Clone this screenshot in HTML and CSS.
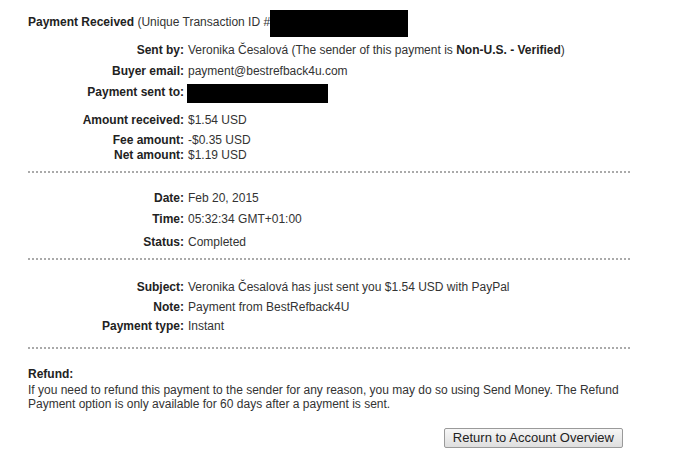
FILE: index.html
```html
<!DOCTYPE html>
<html>
<head>
    <title>Payment Details</title>
<link rel="stylesheet" href="styles.css">
</head>
<body>
  <div class="page">
    <div class="title">
      <b>Payment Received</b> (Unique Transaction ID #
      <span class="redact redact-id"></span>
    </div>

    <div class="group first">
      <div class="row"><span class="label">Sent by:</span><span class="value">Veronika Česalová (The sender of this payment is <b>Non-U.S. - Verified</b>)</span></div>
      <div class="row"><span class="label">Buyer email:</span><span class="value">payment@bestrefback4u.com</span></div>
      <div class="row"><span class="label">Payment sent to:</span><span class="redact redact-to"></span></div>
      <div class="row lead"><span class="label">Amount received:</span><span class="value">$1.54 USD</span></div>
      <div class="row close"><span class="label">Fee amount:</span><span class="value">-$0.35 USD</span></div>
      <div class="row flush"><span class="label">Net amount:</span><span class="value">$1.19 USD</span></div>
    </div>
    <div class="dots"></div>

    <div class="group second">
      <div class="row"><span class="label">Date:</span><span class="value">Feb 20, 2015</span></div>
      <div class="row"><span class="label">Time:</span><span class="value">05:32:34 GMT+01:00</span></div>
      <div class="row wide"><span class="label">Status:</span><span class="value">Completed</span></div>
    </div>
    <div class="dots"></div>

    <div class="group third">
      <div class="row"><span class="label">Subject:</span><span class="value">Veronika Česalová has just sent you $1.54 USD with PayPal</span></div>
      <div class="row close"><span class="label">Note:</span><span class="value">Payment from BestRefback4U</span></div>
      <div class="row closer"><span class="label">Payment type:</span><span class="value">Instant</span></div>
    </div>
    <div class="dots last"></div>

    <div class="refund">
      <div class="refund-head">Refund:</div>
      <p class="refund-text">If you need to refund this payment to the sender for any reason, you may do so using Send Money. The Refund Payment option is only available for 60 days after a payment is sent.</p>
    </div>

    <div class="actions">
      <button type="button" class="btn">Return to Account Overview</button>
    </div>
  </div>
</body>
</html>
```

FILE: styles.css
```css
body {
  margin: 0;
  background-color: #fff;
  color: #333;
  font-family: Arial, "Liberation Sans", sans-serif;
  font-size: 12px;
}
.page {
  padding: 15px 0 0 28px;
}
.title {
  position: relative;
  line-height: 15px;
  color: #333;
}
.title b {
  color: #222;
}
.redact {
  background-color: #000;
}
.redact-id {
  position: absolute;
  left: 242px;
  top: -5px;
  width: 138px;
  height: 27px;
}
.redact-to {
  width: 141px;
  height: 19px;
  margin: 2px 0 0 3px;
}
.group {
  display: flex;
  flex-direction: column;
}
.group.first {
  padding-top: 6px;
}
.group.second {
  padding-top: 11px;
}
.group.third {
  padding-top: 13px;
}
.row {
  display: flex;
  align-items: center;
  height: 13px;
  padding-top: 2px;
  line-height: 15px;
  margin-top: 6px;
}
.row.lead {
  margin-top: 13px;
}
.row.wide {
  margin-top: 8px;
}
.row.close {
  margin-top: 5px;
}
.row.closer {
  margin-top: 4px;
}
.row.flush {
  margin-top: 0;
}
.label {
  width: 156px;
  flex-shrink: 0;
  text-align: right;
  font-weight: bold;
  color: #222;
}
.value {
  margin-left: 4px;
  white-space: nowrap;
}
.value b {
  color: #222;
}
.dots {
  width: 602px;
  height: 2px;
  margin-top: 9px;
  background-image: repeating-linear-gradient(to right, #aaa 0, #aaa 2px, transparent 2px, transparent 4px);
}
.dots.last {
  margin-top: 14px;
}
.refund {
  margin-top: 18px;
  width: 622px;
}
.refund-head {
  font-weight: bold;
  color: #222;
  line-height: 15px;
}
.refund-text {
  margin: 1px 0 0 0;
  line-height: 14px;
}
.actions {
  width: 595px;
  margin-top: 17px;
  display: flex;
  justify-content: flex-end;
}
.btn {
  height: 20px;
  padding: 0 8px;
  border: 1px solid #9a9a9a;
  border-radius: 2px;
  background: linear-gradient(#f7f7f7, #dedede);
  color: #222;
  font-family: Arial, "Liberation Sans", sans-serif;
  font-size: 13px;
  line-height: 18px;
}
```
